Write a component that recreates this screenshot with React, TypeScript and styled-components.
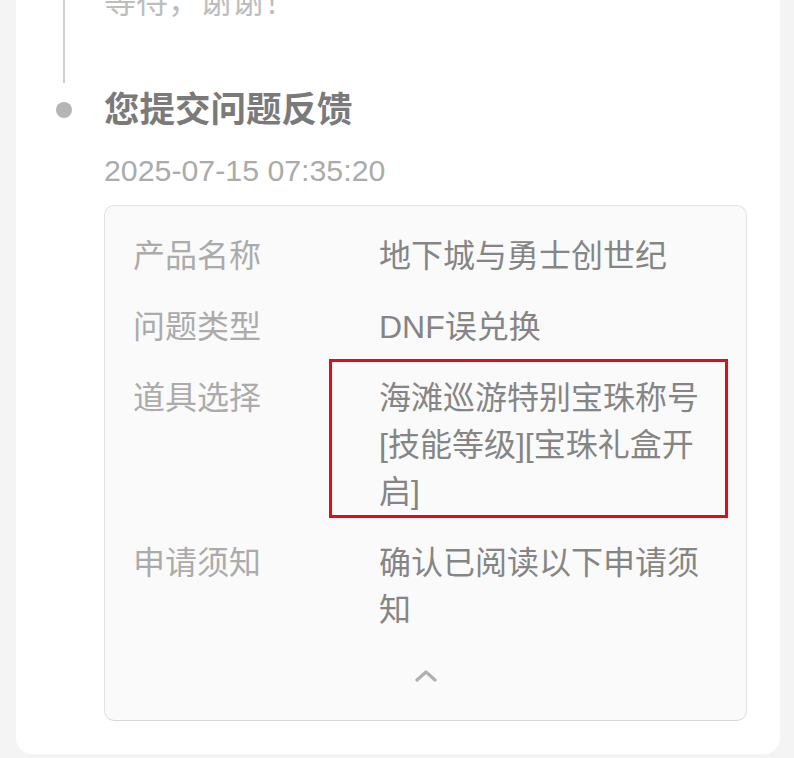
import React from 'react';
import styled, { createGlobalStyle } from 'styled-components';

const GlobalStyle = createGlobalStyle`
  html, body {
    margin: 0;
    padding: 0;
    background: #f4f4f4;
    overflow: hidden;
  }
  body {
    font-family: "Liberation Sans", "Noto Sans CJK SC", sans-serif;
  }
`;

const Card = styled.div`
  margin: 0 14px 6px 16px;
  padding: 0 33px 33px 0;
  background: #fff;
  border-radius: 0 0 16px 16px;
`;

const Item = styled.div`
  display: grid;
  grid-template-columns: 88px 1fr;
`;

const Rail = styled.div`
  display: flex;
  flex-direction: column;
  align-items: center;
  padding-left: 8px;
`;

const Line = styled.div`
  flex: 1;
  width: 2px;
  margin-bottom: 3px;
  background: #d0d0d0;
`;

const Dot = styled.div`
  width: 16px;
  height: 16px;
  margin-top: 16px;
  border-radius: 50%;
  background: #b5b5b5;
`;

const Tail = styled.p`
  margin: -21px 0 0;
  padding-bottom: 60px;
  font-size: 32px;
  line-height: 47px;
  color: #bdbdbd;
`;

const Title = styled.h2`
  margin: 0;
  font-size: 35.5px;
  line-height: 48px;
  font-weight: 700;
  color: #7a7a7a;
`;

const Time = styled.div`
  margin-top: 17px;
  font-size: 30.3px;
  line-height: 40px;
  color: #ababab;
`;

const Detail = styled.div`
  margin-top: 14px;
  padding: 15px 28px 0;
  background: #fafafa;
  border: 1px solid #e2e2e2;
  border-bottom-color: #d8d8d8;
  border-radius: 10px;
`;

const Row = styled.div`
  display: grid;
  grid-template-columns: 246px 1fr;
  padding: 12px 0;
  font-size: 32px;
  line-height: 47px;
`;

const Label = styled.div`
  color: #ababab;
`;

const Value = styled.div<{ $marked?: boolean }>`
  position: relative;
  color: #858585;
  word-break: break-all;

  ${({ $marked }) => $marked && `
    &::after {
      content: "";
      position: absolute;
      top: -16px;
      bottom: -2px;
      left: -50px;
      right: -10px;
      border: 3px solid #e50a14;
    }
  `}
`;

const Toggle = styled.div`
  display: flex;
  justify-content: center;
  padding: 24px 0 38px;
`;

const rows = [
  { label: '产品名称', value: '地下城与勇士创世纪' },
  { label: '问题类型', value: 'DNF误兑换' },
  { label: '道具选择', value: '海滩巡游特别宝珠称号[技能等级][宝珠礼盒开启]', marked: true },
  { label: '申请须知', value: '确认已阅读以下申请须知' },
];

export default function App() {
  return (
    <>
      <GlobalStyle />
      <Card>
        <Item>
          <Rail>
            <Line />
          </Rail>
          <Tail>等待，谢谢！</Tail>
        </Item>
        <Item>
          <Rail>
            <Dot />
          </Rail>
          <div>
            <Title>您提交问题反馈</Title>
            <Time>2025-07-15 07:35:20</Time>
            <Detail>
              {rows.map((r) => (
                <Row key={r.label}>
                  <Label>{r.label}</Label>
                  <Value $marked={r.marked}>{r.value}</Value>
                </Row>
              ))}
              <Toggle>
                <svg width="22" height="12" viewBox="0 0 22 12" fill="none">
                  <polyline
                    points="2,10 11,2 20,10"
                    stroke="#b0b0b0"
                    strokeWidth="3.2"
                    strokeLinecap="round"
                    strokeLinejoin="round"
                  />
                </svg>
              </Toggle>
            </Detail>
          </div>
        </Item>
      </Card>
    </>
  );
}
